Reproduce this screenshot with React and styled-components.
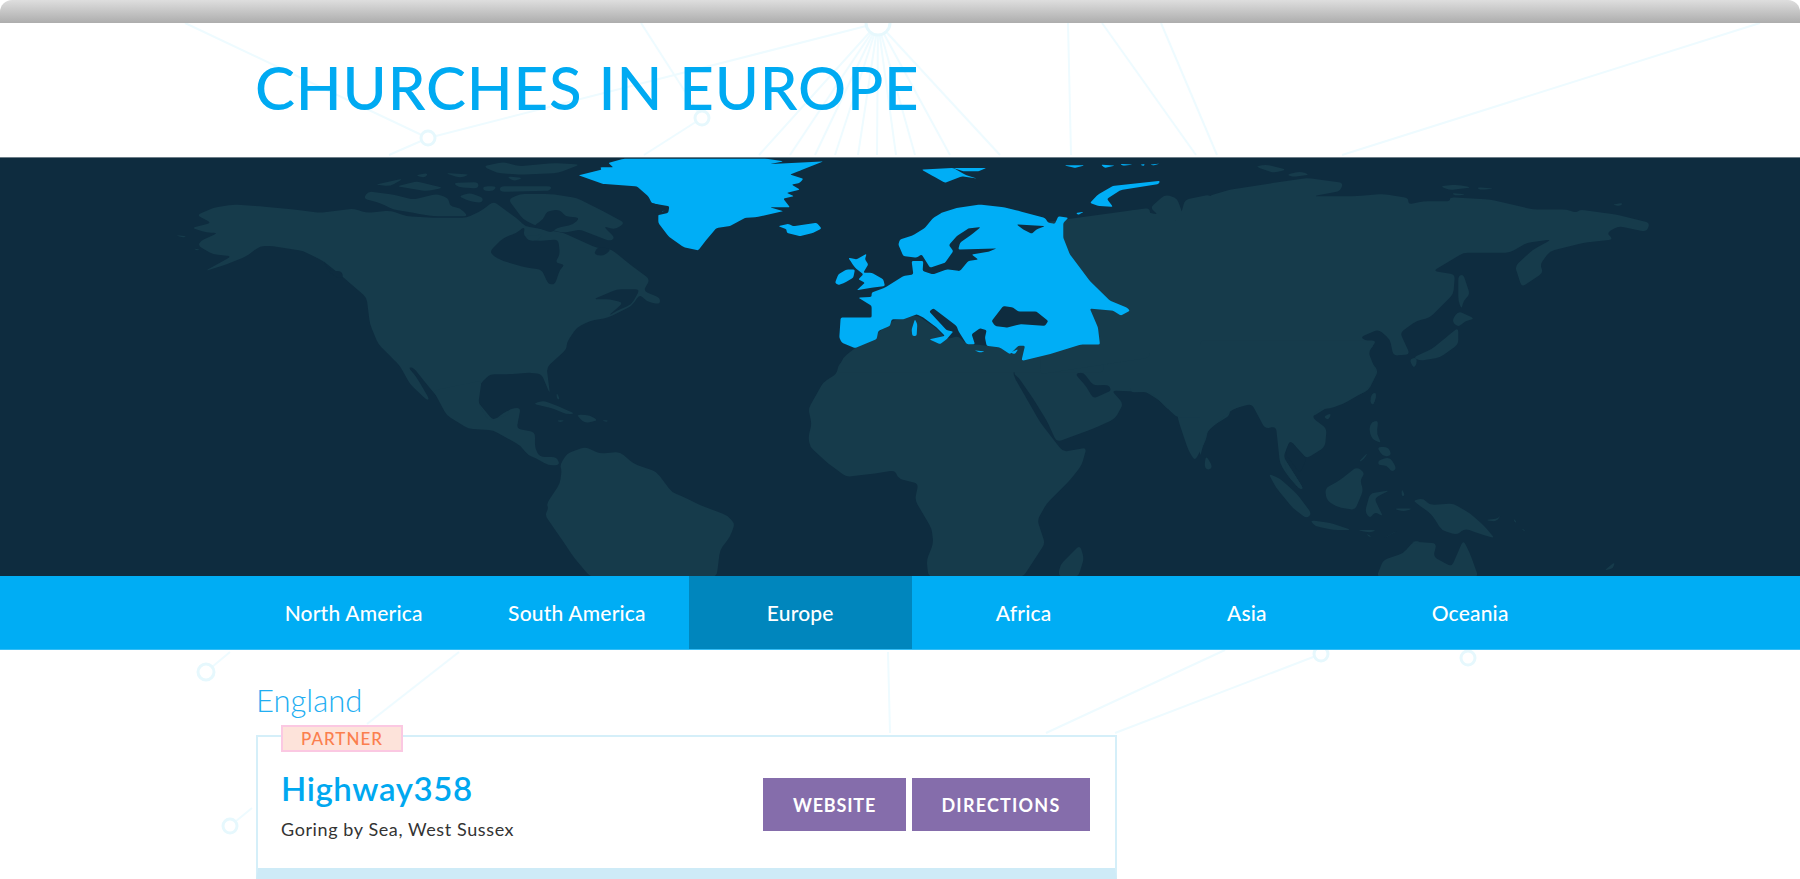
import React from "react";
import styled, { createGlobalStyle } from "styled-components";

const GlobalStyle = createGlobalStyle`
  html, body {
    margin: 0;
    padding: 0;
    background: #fff;
    font-family: "Lato", "Liberation Sans", sans-serif;
  }
  * { box-sizing: border-box; }
`;

const LAND = "#163b4b";
const SEA = "#0e2c3f";
const BLUE = "#00aef6";

// each group holds outlines traced at 3x from the origin (ox, oy)
const mapGroups = [
  {
    ox: 150, oy: 157, fill: LAND,
    shapes: [
      "140,172 190,150 250,140 330,145 430,155 510,165 610,152 650,165 720,158 770,175 850,180 950,180 1000,155 1030,130 1105,185 1125,205 1240,225 1340,270 1385,275 1440,320 1500,365 1480,400 1530,420 1530,440 1490,432 1470,410 1445,445 1375,480 1320,490 1280,510 1250,555 1250,575 1190,630 1200,710 1175,650 1140,645 1085,650 1020,650 990,680 980,730 1030,790 1070,760 1110,750 1100,812 960,812 890,770 880,740 830,680 790,630 775,630 800,660 838,725 830,728 780,680 750,625 720,595 685,560 660,500 650,420 610,385 570,350 520,310 460,280 370,265 330,265 290,295 230,320 165,340 245,295 190,290 145,265 150,250 205,225 170,225 125,210 185,195",
      "640,122 655,100 730,110 790,125 860,108 895,120 900,145 930,150 955,175 850,175 790,165 730,155 690,135",
      "925,115 960,105 1000,120 995,135 960,130",
      "675,80 760,62 720,85",
      "740,85 800,70 880,90 830,100",
      "795,52 835,45 825,60",
      "885,45 960,50 930,60",
      "910,75 985,72 985,92 925,88",
      "1000,25 1060,12 1110,25 1210,15 1290,20 1225,45 1110,50 1040,45",
      "1000,85 1040,85 1030,100 1000,98",
      "1050,85 1205,85 1200,98 1050,102",
      "1070,55 1120,60 1090,70",
      "1075,125 1110,108 1200,108 1280,120 1350,155 1425,195 1395,215 1360,205 1395,240 1380,250 1290,215 1240,225 1160,205 1120,185",
      "75,232 110,235 100,240",
      "130,272 150,275 140,278",
    ],
  },
  {
    ox: 150, oy: 157, fill: SEA,
    shapes: [
      "1020,280 1060,240 1100,225 1125,205 1120,235 1160,250 1225,245 1230,290 1215,315 1245,320 1230,335 1215,380 1195,380 1175,335 1130,330 1060,310 1030,295",
      "1180,185 1190,160 1230,155 1245,175 1290,180 1270,200 1220,210 1205,225 1150,205",
      "1330,290 1345,265 1385,275 1360,295",
      "1330,425 1400,395 1470,395 1445,440 1400,460 1375,475 1420,435 1380,425",
      "520,305 540,340 575,340 580,360 560,360 530,335",
    ],
  },
  {
    ox: 150, oy: 157, fill: LAND,
    shapes: ["1125,235 1180,230 1160,250 1135,248"],
  },
  {
    ox: 400, oy: 340, fill: LAND,
    shapes: [
      "100,150 245,120 235,190 265,240 320,225 330,205 362,202 350,265 405,275 405,325 420,350 470,350 480,375 445,375 410,355 385,345 360,315 280,270 205,265 140,225",
      "400,190 430,180 480,200 525,220 500,222 460,205 420,195",
      "530,222 570,225 595,240 555,248 540,235",
      "470,240 495,240 480,246",
      "605,240 625,240 620,245",
      "470,155 480,178 470,175",
      "480,375 500,340 555,320 600,340 660,335 700,370 770,395 815,455 860,475 900,495 980,525 1005,550 990,590 960,630 950,710 570,710 520,650 480,590 435,525 445,505 440,490 480,430 485,390",
    ],
  },
  {
    // Africa and the Arabian side
    ox: 800, oy: 340, fill: LAND,
    shapes: [
      "125,65 165,25 280,10 420,20 520,35 640,55 640,105 680,175 720,245 770,310 790,335 860,322 845,375 810,420 740,490 712,540 735,610 670,710 385,710 380,660 400,610 395,565 345,480 355,430 295,415 285,390 225,400 140,410 85,370 30,320 25,290 35,250 25,205 70,125 110,100 115,75",
      "840,615 852,655 835,710 775,710 780,675",
      "640,100 670,60 850,10 900,0 1290,0 1290,225 1225,265 1218,300 1185,362 1165,330 1135,240 1128,195 1105,210 1085,185 1040,155 935,150 970,190 945,235 880,265 770,305 740,240 700,175 655,110",
      "1218,345 1238,380 1225,390 1213,380",
    ],
  },
  {
    ox: 800, oy: 340, fill: SEA,
    shapes: ["825,100 850,95 880,135 925,133 935,150 880,175 860,140"],
  },
  {
    // Mediterranean side that runs up to the highlighted coast
    ox: 570, oy: 157, fill: LAND,
    shapes: [
      "855,572 925,525 965,490 1040,472 1100,512 1130,545 1165,535 1190,560 1215,560 1250,565 1345,565 1600,500 1600,645 800,645 820,600",
    ],
  },
  {
    // north and east Asia
    ox: 1130, oy: 157, fill: LAND,
    shapes: [
      "0,155 60,165 85,170 60,150 105,110 140,120 150,145 160,175 120,195 150,180 165,125 240,110 270,140 235,115 300,95 430,75 530,60 640,75 630,100 550,115 680,115 760,108 835,120 835,140 880,130 960,130 960,118 1080,125 1210,155 1310,155 1340,165 1350,155 1460,170 1560,195 1550,222 1465,205 1430,225 1450,245 1360,255 1260,280 1230,320 1240,345 1175,388 1155,325 1210,275 1265,245 1190,255 1140,285 1000,285 910,340 975,350 970,410 900,480 860,490 810,525 840,590 790,595 780,545 745,515 690,540 735,560 705,590 745,640 715,700 600,745 545,780 400,780 365,735 310,755 260,780 140,780 110,750 60,703 0,705",
      "375,25 410,20 470,35 430,45",
      "470,50 510,40 540,50 490,57",
      "930,85 980,80 1025,88 960,97",
      "1040,88 1095,92 1050,96",
      "965,105 1010,110 975,113",
      "1445,140 1480,135 1470,145",
      "985,355 1000,350 1020,410 1000,430 995,455 985,430",
      "965,490 985,460 1035,483 1005,490 985,510",
      "985,510 985,560 930,600 870,610 850,600 905,575 960,530",
      "838,605 860,600 860,620 850,632",
      "725,710 740,705 730,745 720,730",
      "-270,195 60,150 60,600 -270,650",
    ],
  },
  {
    // south east Asia, the islands, Australia
    ox: 1200, oy: 340, fill: LAND,
    shapes: [
      "0,0 530,0 505,35 525,85 530,100 500,150 430,190 390,205 360,205 335,230 380,265 375,320 320,355 270,300 250,350 310,445 300,448 262,405 240,370 228,258 195,265 155,190 100,205 20,275 0,350",
      "520,155 530,165 520,195 510,185",
      "205,400 240,415 290,460 335,520 320,535 280,505 230,445",
      "330,540 390,548 455,570 400,570 345,558",
      "470,570 530,570 510,578",
      "500,580 515,590 505,590",
      "550,595 595,570 560,590",
      "375,445 420,420 470,380 495,398 480,420 490,450 465,510 410,500 380,480",
      "510,460 570,450 530,470 525,480 550,530 525,515 510,535 495,515",
      "515,245 535,240 530,280 545,310 515,295 507,265",
      "535,360 570,350 590,385 575,395 560,375 535,375",
      "530,320 565,320 575,345 550,350",
      "475,365 505,335 490,360",
      "640,480 670,475 690,495 760,490 810,520 850,555 885,595 835,580 795,565 770,585 725,570 700,530 685,515 650,490",
      "605,445 615,465 605,470",
      "580,505 640,505 610,515",
      "855,540 895,535 905,520 890,545",
      "940,535 950,545 945,548",
      "965,565 978,572 970,572",
      "530,710 550,660 610,640 640,605 710,610 700,650 755,680 790,600 810,640 835,710",
      "1215,690 1245,665 1240,685 1220,690",
      "632,605 660,603 650,612",
    ],
  },
  {
    ox: 1200, oy: 340, fill: SEA,
    shapes: ["255,340 270,300 320,355 300,400"],
  },
  {
    ox: 1200, oy: 340, fill: LAND,
    shapes: ["370,228 395,218 385,240", "250,350 310,445 300,448 262,405"],
  },
  {
    // highlighted continent
    ox: 570, oy: 157, fill: BLUE, corner: 5,
    shapes: [
      "25,52 95,35 90,28 130,28 115,15 160,2 590,2 640,10 600,18 760,10 690,38 660,50 700,62 690,75 665,80 690,95 650,105 672,115 640,122 660,148 600,148 640,160 560,178 525,180 480,205 440,210 410,245 385,278 340,268 295,235 265,195 265,170 295,150 245,135 235,115 200,85 100,78",
      "625,205 655,198 670,205 740,195 755,212 730,225 690,235 650,225 650,215",
      "1055,35 1150,30 1185,50 1220,62 1175,55 1125,75 1090,55",
      "1150,30 1250,30 1225,40 1180,40",
      "985,260 990,245 1030,232 1065,210 1090,180 1115,165 1160,150 1230,140 1300,148 1350,160 1425,180 1435,195 1455,198 1465,175 1495,180 1480,195 1480,240 1500,290 1560,370 1620,429 1671,450 1680,459 1653,474 1629,459 1560,453 1584,510 1590,561 1533,561 1446,588 1362,609 1355,608 1365,565 1345,565 1320,590 1290,570 1250,565 1245,540 1250,518 1230,512 1205,530 1215,560 1190,560 1165,520 1160,505 1090,452 1078,462 1130,518 1150,522 1130,545 1110,560 1078,545 1125,535 1100,510 1060,480 1040,470 1000,485 965,485 960,505 925,520 920,545 855,572 815,555 808,540 812,480 905,480 905,445 865,420 905,418 905,405 945,390 1000,355 1030,350 1025,310 1060,310 1058,340 1090,350 1130,335 1170,340 1195,310 1225,305 1205,290 1255,282 1280,272 1165,275 1170,255 1205,230 1232,208 1195,212 1160,235 1137,262 1150,280 1125,315 1080,330 1055,290 1040,300 1000,295",
      "795,375 805,350 830,335 855,335 850,360 825,375 805,382",
      "845,315 835,300 860,305 890,288 885,305 895,320 880,345 905,345 940,365 945,385 905,390 860,398 885,375 865,365 880,350 855,330",
      "1035,485 1042,500 1040,535 1027,535 1025,515",
      "1212,578 1245,582 1230,585",
      "1320,585 1345,575 1335,590",
      "1482,22 1545,22 1515,30",
      "1593,20 1635,23 1605,30",
      "1650,18 1690,20 1660,23",
      "1710,20 1725,18 1722,24",
      "1740,20 1770,17 1750,22",
      "1560,135 1584,110 1629,84 1770,69 1767,78 1653,96 1611,123 1629,147 1584,144",
      "1518,165 1542,162 1524,171",
    ],
  },
  {
    ox: 570, oy: 157, fill: SEA, corner: 5,
    shapes: [
      "1340,200 1425,205 1400,215 1385,228 1360,215",
      "1265,490 1300,445 1330,450 1345,462 1400,462 1435,490 1425,505 1350,500 1310,510 1275,505",
      "240,135 298,145 295,165 265,172 250,165 278,162 287,152 248,147",
    ],
  },
];

// rounds the corners of a traced outline so coasts don't look cut with a ruler
const toCoast = (points, corner = 14) => {
  const pts = points.split(" ").map((s) => s.split(",").map(Number));
  const n = pts.length;
  const toward = (a, b) => {
    const dx = b[0] - a[0];
    const dy = b[1] - a[1];
    const t = Math.min(corner / (Math.hypot(dx, dy) || 1), 0.45);
    return `${(a[0] + dx * t).toFixed(1)} ${(a[1] + dy * t).toFixed(1)}`;
  };
  let d = "";
  pts.forEach((cur, i) => {
    const prev = pts[(i - 1 + n) % n];
    const next = pts[(i + 1) % n];
    d += `${i === 0 ? "M" : "L"}${toward(cur, prev)}Q${cur[0]} ${cur[1]} ${toward(cur, next)}`;
  });
  return `${d}Z`;
};

const networkLines = [
  [185, 23, 428, 138], [428, 138, 878, 23], [428, 138, 389, 155],
  [641, 23, 702, 118], [702, 118, 644, 155],
  [878, 23, 759, 155], [878, 23, 790, 155], [878, 23, 815, 155], [878, 23, 835, 155],
  [878, 23, 858, 155], [878, 23, 877, 155],
  [878, 23, 896, 155], [878, 23, 915, 155], [878, 23, 950, 155], [878, 23, 1000, 155],
  [1068, 23, 1071, 155], [1102, 23, 1196, 155], [1161, 23, 1217, 155], [1760, 23, 1342, 155],
  [230, 652, 206, 672], [459, 652, 367, 724], [888, 652, 890, 733],
  [1321, 654, 1115, 733], [1225, 650, 1046, 733], [252, 808, 230, 826],
];

const networkNodes = [
  [878, 23, 12], [428, 138, 7], [702, 118, 7], [206, 672, 8], [230, 826, 7], [1321, 654, 7], [1468, 658, 7],
];

const Page = styled.div`
  position: relative;
  width: 1800px;
  height: 879px;
  overflow: hidden;
  background: #fff;
`;

const Network = styled.svg`
  position: absolute;
  inset: 0;
  z-index: 0;
  pointer-events: none;
`;

const TopBar = styled.div`
  position: relative;
  z-index: 1;
  height: 23px;
  border-radius: 12px 12px 0 0;
  background: linear-gradient(#dedede, #adadad);
`;

const Header = styled.header`
  position: relative;
  z-index: 1;
  height: 134px;
  padding: 28px 0 0 255px;
`;

const Title = styled.h1`
  margin: 0;
  font-size: 60px;
  line-height: 72px;
  font-weight: 500;
  letter-spacing: 0.85px;
  color: #00aaf2;
  white-space: nowrap;
`;

const MapPanel = styled.svg`
  position: relative;
  z-index: 1;
  display: block;
  width: 1800px;
  height: 419px;
  background: ${SEA};
  border-top: 1px solid #6d7e88;
`;

const Nav = styled.nav`
  position: relative;
  z-index: 1;
  display: grid;
  grid-template-columns: repeat(6, 223.3px);
  height: 74px;
  padding-left: 242px;
  background: #00adf4;
  border-bottom: 1px solid #35bdf5;
`;

const Tab = styled.a`
  display: flex;
  align-items: center;
  justify-content: center;
  font-size: 21px;
  font-weight: 500;
  letter-spacing: 0.2px;
  color: #fff;
  background: ${(p) => (p.$active ? "#0086bd" : "transparent")};
`;

const Content = styled.main`
  position: relative;
  z-index: 1;
  padding: 31px 0 0 256px;
`;

const Region = styled.h2`
  margin: 0 0 16px;
  font-size: 31px;
  line-height: 38px;
  font-weight: 300;
  color: #22aef2;
`;

const Card = styled.article`
  position: relative;
  display: flex;
  align-items: flex-start;
  justify-content: space-between;
  width: 861px;
  height: 145px;
  padding: 41px 25px 0 23px;
  background: #fff;
  border: 2px solid #d5eff9;
  border-bottom: 12px solid #ceebf7;
`;

const Tag = styled.span`
  position: absolute;
  top: -12px;
  left: 23px;
  display: flex;
  align-items: center;
  justify-content: center;
  width: 122px;
  height: 27px;
  font-size: 17px;
  font-weight: 500;
  letter-spacing: 1px;
  color: #fb7f4e;
  background: #fde3da;
  border: 2px solid #fbc8e2;
`;

const Info = styled.div`
  display: flex;
  flex-direction: column;
`;

const Name = styled.h3`
  margin: -5px 0 15px;
  font-size: 33px;
  line-height: 30px;
  font-weight: 600;
  letter-spacing: 0.6px;
  color: #00a8f0;
`;

const Place = styled.p`
  margin: 0;
  font-size: 18px;
  line-height: 22px;
  letter-spacing: 0.6px;
  color: #333;
`;

const Actions = styled.div`
  display: flex;
  gap: 6px;
`;

const ActionButton = styled.a`
  display: flex;
  align-items: center;
  justify-content: center;
  width: ${(p) => p.$width}px;
  height: 53px;
  font-size: 18px;
  font-weight: 700;
  letter-spacing: ${(p) => p.$spacing}px;
  color: #fff;
  background: #856dab;
`;

const regions = [
  { name: "North America" },
  { name: "South America" },
  { name: "Europe", active: true },
  { name: "Africa" },
  { name: "Asia" },
  { name: "Oceania" },
];

export default function App() {
  return (
    <Page>
      <GlobalStyle />
      <Network width="1800" height="879" viewBox="0 0 1800 879">
        {networkLines.map(([x1, y1, x2, y2], i) => (
          <line key={i} x1={x1} y1={y1} x2={x2} y2={y2} stroke="#eefbff" strokeWidth="2" />
        ))}
        {networkNodes.map(([cx, cy, r], i) => (
          <circle key={i} cx={cx} cy={cy} r={r} fill="#fff" stroke="#e6f8fd" strokeWidth="3" />
        ))}
      </Network>
      <TopBar />
      <Header>
        <Title>CHURCHES IN EUROPE</Title>
      </Header>
      <MapPanel viewBox="0 157 1800 419" preserveAspectRatio="none" aria-label="World map">
        {mapGroups.map((group, i) => (
          <g key={i} transform={`translate(${group.ox} ${group.oy}) scale(0.3333)`} fill={group.fill}>
            {group.shapes.map((points, j) => (
              <path key={j} d={toCoast(points, group.corner)} />
            ))}
          </g>
        ))}
      </MapPanel>
      <Nav>
        {regions.map((r) => (
          <Tab key={r.name} $active={r.active}>{r.name}</Tab>
        ))}
      </Nav>
      <Content>
        <Region>England</Region>
        <Card>
          <Tag>PARTNER</Tag>
          <Info>
            <Name>Highway358</Name>
            <Place>Goring by Sea, West Sussex</Place>
          </Info>
          <Actions>
            <ActionButton $width={143} $spacing={0.8}>WEBSITE</ActionButton>
            <ActionButton $width={178} $spacing={1.2}>DIRECTIONS</ActionButton>
          </Actions>
        </Card>
      </Content>
    </Page>
  );
}
